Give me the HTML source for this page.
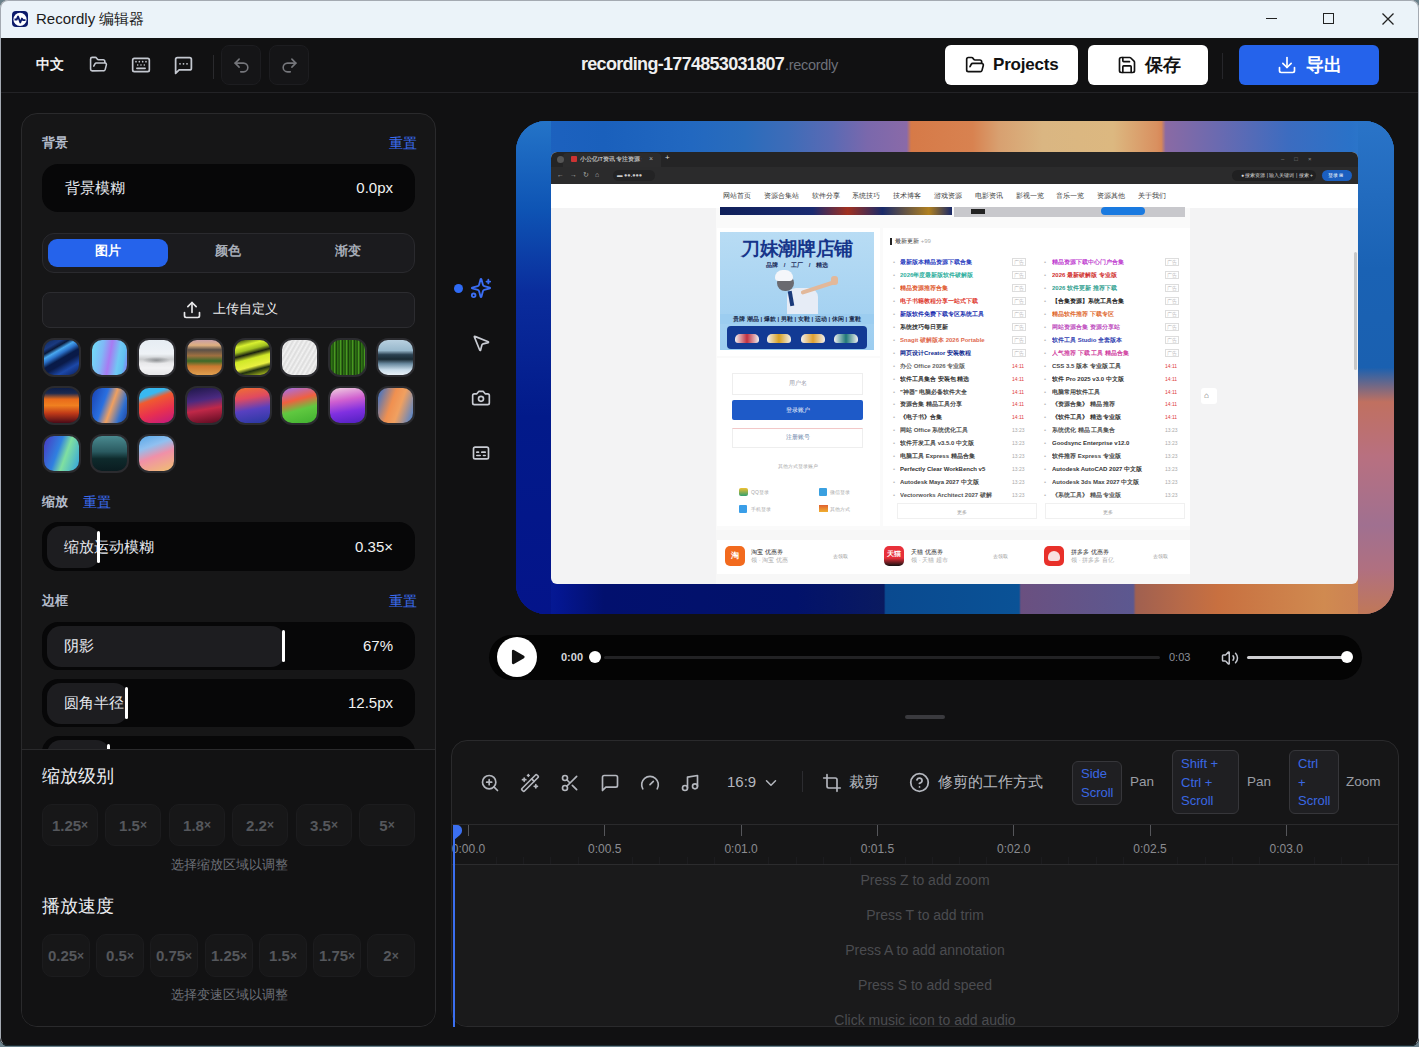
<!DOCTYPE html>
<html><head><meta charset="utf-8">
<style>
*{box-sizing:border-box;margin:0;padding:0}
html,body{width:1419px;height:1047px;overflow:hidden;background:#6b818b;font-family:"Liberation Sans",sans-serif}
.a{position:absolute}
svg{display:block}
.ic{fill:none;stroke:currentColor;stroke-width:2;stroke-linecap:round;stroke-linejoin:round}
#win{position:absolute;left:0;top:0;width:1419px;height:1046px;border-radius:8px;overflow:hidden;background:#111112}
#wb{position:absolute;left:0;top:0;width:1419px;height:1046px;border-radius:8px;border:1px solid #a4aab2;border-bottom-color:#1a2a30;pointer-events:none}
#title{left:0;top:0;width:1419px;height:38px;background:#ebf3f9}
#app{left:0;top:38px;width:1419px;height:1009px;background:#111112}
.lbl{color:#b4bccb;font-size:13px;font-weight:bold}
.rst{color:#3b6cf0;font-size:13.5px}
.slider{background:#070708;border-radius:16px}
.fill{background:#1d1d20;border-radius:14px}
.thumb{background:#fff;width:3px;border-radius:2px}
.sval{color:#f2f2f2;font-size:15px}
.sname{color:#e6e9ef;font-size:15px}
.zb{background:#171718;border:1px solid #1c1c1e;border-radius:10px;color:#55575c;font-weight:bold;font-size:15px;display:flex;align-items:center;justify-content:center}
.kbd{background:#1f1f22;border:1px solid #36363a;border-radius:6px;color:#3a68e4;font-size:13px;line-height:18.5px;padding:2px 0 0 9px}
.tk{color:#8b8c91;font-size:12px}
.hint{color:#4b4c50;font-size:14px;text-align:center;width:400px}
</style></head><body>
<div id="win">
<div id="title" class="a">
  <svg class="a" style="left:11px;top:10px" width="18" height="18" viewBox="0 0 18 18"><rect x="1" y="1" width="16" height="16" rx="4" fill="#0c1a6a"/><circle cx="9" cy="9.4" r="6.6" fill="#fff"/><path d="M3.5 9.5h2.2l1.4-3 2.2 6 1.6-4 1 1.6h2.6" fill="none" stroke="#0c1a6a" stroke-width="1.8" stroke-linejoin="round"/></svg>
  <div class="a" style="left:36px;top:10px;font-size:15px;color:#1b1b1b;line-height:18px">Recordly 编辑器</div>
  <div class="a" style="left:1266px;top:18px;width:11px;height:1px;background:#222"></div>
  <div class="a" style="left:1323px;top:13px;width:11px;height:11px;border:1.2px solid #222"></div>
  <svg class="a" style="left:1381px;top:12px" width="14" height="14" viewBox="0 0 14 14"><path d="M1.5 1.5l11 11M12.5 1.5l-11 11" stroke="#222" stroke-width="1.3"/></svg>
</div>
<div id="app" class="a"></div>
<div class="a" style="left:0;top:92px;width:1419px;height:1px;background:#232326"></div>
<div class="a" style="left:36px;top:56px;font-size:14px;font-weight:bold;color:#f0f0f0;line-height:16px">中文</div>
<svg class="a ic" style="left:89px;top:55px;color:#c4c8d0" width="19" height="19" viewBox="0 0 24 24" stroke-width="1.9"><path d="m6 14 1.5-2.9A2 2 0 0 1 9.24 10H20a2 2 0 0 1 1.94 2.5l-1.54 6a2 2 0 0 1-1.95 1.5H4a2 2 0 0 1-2-2V5a2 2 0 0 1 2-2h3.9a2 2 0 0 1 1.69.9l.81 1.2a2 2 0 0 0 1.67.9H18a2 2 0 0 1 2 2v2"/></svg>
<svg class="a ic" style="left:131px;top:55px;color:#c4c8d0" width="20" height="20" viewBox="0 0 24 24" stroke-width="1.9"><rect x="2" y="4" width="20" height="16" rx="2"/><path d="M6 8h.001M10 8h.001M14 8h.001M18 8h.001M8 12h.001M12 12h.001M16 12h.001M7 16h10"/></svg>
<svg class="a ic" style="left:173px;top:55px;color:#c4c8d0" width="21" height="21" viewBox="0 0 24 24" stroke-width="1.9"><path d="M21 15a2 2 0 0 1-2 2H7l-4 4V5a2 2 0 0 1 2-2h14a2 2 0 0 1 2 2z"/><path d="M8 10h.01M12 10h.01M16 10h.01"/></svg>
<div class="a" style="left:213px;top:55px;width:1px;height:24px;background:#2a2a2d"></div>
<div class="a" style="left:221px;top:45px;width:40px;height:40px;border-radius:8px;background:#151517;border:1px solid #1d1d20"></div>
<svg class="a ic" style="left:232px;top:56px;color:#75767b" width="19" height="19" viewBox="0 0 24 24" stroke-width="1.9"><path d="M9 14 4 9l5-5"/><path d="M4 9h10.5a5.5 5.5 0 0 1 5.5 5.5a5.5 5.5 0 0 1-5.5 5.5H11"/></svg>
<div class="a" style="left:269px;top:45px;width:40px;height:40px;border-radius:8px;background:#151517;border:1px solid #1d1d20"></div>
<svg class="a ic" style="left:280px;top:56px;color:#75767b" width="19" height="19" viewBox="0 0 24 24" stroke-width="1.9"><path d="m15 14 5-5-5-5"/><path d="M20 9H9.5A5.5 5.5 0 0 0 4 14.5A5.5 5.5 0 0 0 9.5 20H13"/></svg>
<div class="a" style="left:581px;top:54px;font-size:18px;font-weight:bold;color:#efefef;letter-spacing:-0.7px;line-height:20px;white-space:nowrap">recording-1774853031807<span style="font-weight:normal;font-size:14.5px;color:#6d7079;letter-spacing:-0.3px;margin-left:1px">.recordly</span></div>
<div class="a" style="left:945px;top:45px;width:133px;height:40px;border-radius:6px;background:#fff"></div>
<svg class="a ic" style="left:965px;top:55px;color:#111" width="20" height="20" viewBox="0 0 24 24" stroke-width="2"><path d="m6 14 1.5-2.9A2 2 0 0 1 9.24 10H20a2 2 0 0 1 1.94 2.5l-1.54 6a2 2 0 0 1-1.95 1.5H4a2 2 0 0 1-2-2V5a2 2 0 0 1 2-2h3.9a2 2 0 0 1 1.69.9l.81 1.2a2 2 0 0 0 1.67.9H18a2 2 0 0 1 2 2v2"/></svg>
<div class="a" style="left:993px;top:55px;font-size:17px;font-weight:bold;color:#111;line-height:20px;letter-spacing:-0.2px">Projects</div>
<div class="a" style="left:1088px;top:45px;width:120px;height:40px;border-radius:6px;background:#fff"></div>
<svg class="a ic" style="left:1117px;top:55px;color:#111" width="20" height="20" viewBox="0 0 24 24" stroke-width="2"><path d="M15.2 3a2 2 0 0 1 1.4.6l3.8 3.8a2 2 0 0 1 .6 1.4V19a2 2 0 0 1-2 2H5a2 2 0 0 1-2-2V5a2 2 0 0 1 2-2z"/><path d="M17 21v-7a1 1 0 0 0-1-1H8a1 1 0 0 0-1 1v7"/><path d="M7 3v4a1 1 0 0 0 1 1h7"/></svg>
<div class="a" style="left:1145px;top:55px;font-size:17.5px;font-weight:bold;color:#111;line-height:20px">保存</div>
<div class="a" style="left:1222px;top:53px;width:1px;height:26px;background:#26262a"></div>
<div class="a" style="left:1239px;top:45px;width:140px;height:40px;border-radius:6px;background:#2563eb"></div>
<svg class="a ic" style="left:1277px;top:55px;color:#fff" width="20" height="20" viewBox="0 0 24 24" stroke-width="2"><path d="M21 15v4a2 2 0 0 1-2 2H5a2 2 0 0 1-2-2v-4"/><path d="m7 10 5 5 5-5"/><path d="M12 15V3"/></svg>
<div class="a" style="left:1306px;top:55px;font-size:18px;font-weight:bold;color:#fff;line-height:20px">导出</div>
<div class="a" style="left:21px;top:113px;width:415px;height:914px;border-radius:16px;background:#161617;border:1px solid #2a2a2c;overflow:hidden"><div class="a" style="left:0;top:636px;width:413px;height:300px;background:#121213"></div></div>
<div class="a lbl" style="left:42px;top:134px;line-height:18px">背景</div>
<div class="a rst" style="left:389px;top:135px;line-height:18px">重置</div>
<div class="a slider" style="left:42px;top:164px;width:373px;height:48px"></div>
<div class="a sname" style="left:65px;top:178px;line-height:19px">背景模糊</div>
<div class="a sval" style="left:300px;top:178px;width:93px;text-align:right;line-height:19px">0.0px</div>
<div class="a" style="left:42px;top:233px;width:373px;height:40px;border-radius:12px;background:#1b1b1e;border:1px solid #2a2a2e"></div>
<div class="a" style="left:48px;top:239px;width:120px;height:28px;border-radius:9px;background:#2563eb"></div>
<div class="a" style="left:48px;top:242px;width:120px;text-align:center;font-size:13px;font-weight:bold;color:#fff;line-height:18px">图片</div>
<div class="a" style="left:168px;top:242px;width:120px;text-align:center;font-size:13px;font-weight:bold;color:#a7adb8;line-height:18px">颜色</div>
<div class="a" style="left:288px;top:242px;width:120px;text-align:center;font-size:13px;font-weight:bold;color:#a7adb8;line-height:18px">渐变</div>
<div class="a" style="left:42px;top:292px;width:373px;height:36px;border-radius:8px;background:#1c1c1f;border:1px solid #2c2c30"></div>
<svg class="a ic" style="left:182px;top:300px;color:#e8e8ea" width="20" height="20" viewBox="0 0 24 24" stroke-width="2"><path d="M21 15v4a2 2 0 0 1-2 2H5a2 2 0 0 1-2-2v-4"/><path d="m17 8-5-5-5 5"/><path d="M12 3v12"/></svg>
<div class="a" style="left:213px;top:300px;font-size:13px;color:#ececee;line-height:18px">上传自定义</div>
<div class="a" style="left:42px;top:338px;width:39px;height:39px;border-radius:12px;border:2px solid #2b2b2f;background:linear-gradient(150deg,#10285a 0%,#1a3a80 18%,#0a1838 26%,#48a8f0 34%,#2a70c8 42%,#081a48 52%,#0a1a48 62%,#1c48a8 78%,#0a1e5a 100%)"></div>
<div class="a" style="left:90px;top:338px;width:39px;height:39px;border-radius:12px;border:2px solid #2b2b2f;background:linear-gradient(100deg,#6fe0f8 0%,#80b8f6 30%,#a87af2 50%,#70c8f4 72%,#60c0f0 85%,#8a70f0 100%)"></div>
<div class="a" style="left:137px;top:338px;width:39px;height:39px;border-radius:12px;border:2px solid #2b2b2f;background:radial-gradient(ellipse 40% 10% at 50% 58%,rgba(90,94,98,.55) 0%,transparent 100%),linear-gradient(180deg,#e6edf3 0%,#eef2f6 40%,#c8cacc 55%,#e8e8ea 66%,#f2f2f4 80%,#e4e4e6 100%)"></div>
<div class="a" style="left:185px;top:338px;width:39px;height:39px;border-radius:12px;border:2px solid #2b2b2f;background:linear-gradient(180deg,#c8a0a8 0%,#e0b080 15%,#5a5048 28%,#a07040 45%,#3a6a28 60%,#c87830 75%,#e0a050 100%)"></div>
<div class="a" style="left:233px;top:338px;width:39px;height:39px;border-radius:12px;border:2px solid #2b2b2f;background:linear-gradient(165deg,#1a2a08 0%,#d8f030 18%,#a0c020 30%,#1a2010 40%,#d0e828 52%,#e8f040 70%,#203010 80%,#d0e020 100%)"></div>
<div class="a" style="left:280px;top:338px;width:39px;height:39px;border-radius:12px;border:2px solid #2b2b2f;background:repeating-linear-gradient(120deg,#f4f4f4 0px,#dcdcdc 2px,#f0f0f0 4px),#eee"></div>
<div class="a" style="left:328px;top:338px;width:39px;height:39px;border-radius:12px;border:2px solid #2b2b2f;background:repeating-linear-gradient(90deg,#0e2a08 0px,#3a8a18 2px,#143a0a 3px,#58b828 5px,#0c2006 6px),#1c4a0c"></div>
<div class="a" style="left:376px;top:338px;width:39px;height:39px;border-radius:12px;border:2px solid #2b2b2f;background:linear-gradient(180deg,#b8d0e0 0%,#98b8cc 30%,#2a4050 42%,#1a2a34 55%,#6a8aa0 68%,#c8dcea 85%,#e8f0f6 100%)"></div>
<div class="a" style="left:42px;top:386px;width:39px;height:39px;border-radius:12px;border:2px solid #2b2b2f;background:linear-gradient(180deg,#0e1e48 0%,#1a2a50 15%,#e86a1a 32%,#f08020 50%,#c03a18 72%,#4a0a18 100%)"></div>
<div class="a" style="left:90px;top:386px;width:39px;height:39px;border-radius:12px;border:2px solid #2b2b2f;background:linear-gradient(110deg,#1840b0 0%,#2a70e0 35%,#f0a060 55%,#3070d0 80%,#1a40a0 100%)"></div>
<div class="a" style="left:137px;top:386px;width:39px;height:39px;border-radius:12px;border:2px solid #2b2b2f;background:linear-gradient(160deg,#38b8f0 0%,#38b8f0 22%,#f05a30 35%,#e83050 65%,#c01880 100%)"></div>
<div class="a" style="left:185px;top:386px;width:39px;height:39px;border-radius:12px;border:2px solid #2b2b2f;background:linear-gradient(170deg,#1e1848 0%,#4a2a80 35%,#c02848 60%,#5a0a20 100%)"></div>
<div class="a" style="left:233px;top:386px;width:39px;height:39px;border-radius:12px;border:2px solid #2b2b2f;background:linear-gradient(170deg,#f07030 0%,#e04a60 30%,#5840c0 60%,#2838a0 100%)"></div>
<div class="a" style="left:280px;top:386px;width:39px;height:39px;border-radius:12px;border:2px solid #2b2b2f;background:linear-gradient(165deg,#a070f0 0%,#f06040 35%,#60c840 60%,#40b030 100%)"></div>
<div class="a" style="left:328px;top:386px;width:39px;height:39px;border-radius:12px;border:2px solid #2b2b2f;background:linear-gradient(170deg,#f0d0e0 0%,#d060d0 35%,#8030e0 65%,#5020c0 100%)"></div>
<div class="a" style="left:376px;top:386px;width:39px;height:39px;border-radius:12px;border:2px solid #2b2b2f;background:linear-gradient(110deg,#3070d0 0%,#f09050 40%,#f0a060 60%,#4080d8 100%)"></div>
<div class="a" style="left:42px;top:434px;width:39px;height:39px;border-radius:12px;border:2px solid #2b2b2f;background:linear-gradient(110deg,#4838c0 0%,#3080e0 40%,#80e0a0 60%,#30a0e0 100%)"></div>
<div class="a" style="left:90px;top:434px;width:39px;height:39px;border-radius:12px;border:2px solid #2b2b2f;background:linear-gradient(180deg,#4a8a90 0%,#2a5a60 45%,#0e2a2c 65%,#0a1c20 100%)"></div>
<div class="a" style="left:137px;top:434px;width:39px;height:39px;border-radius:12px;border:2px solid #2b2b2f;background:linear-gradient(160deg,#58a8e8 0%,#90c0f0 30%,#f090a8 55%,#f0c070 100%)"></div>
<div class="a lbl" style="left:42px;top:493px;line-height:18px">缩放</div>
<div class="a rst" style="left:83px;top:494px;line-height:18px">重置</div>
<div class="a slider" style="left:42px;top:522px;width:373px;height:49px"></div>
<div class="a fill" style="left:47px;top:526px;width:53px;height:42px"></div>
<div class="a sname" style="left:64px;top:537px;line-height:19px">缩放运动模糊</div>
<div class="a thumb" style="left:97px;top:531px;height:32px"></div>
<div class="a sval" style="left:300px;top:537px;width:93px;text-align:right;line-height:19px">0.35×</div>
<div class="a lbl" style="left:42px;top:592px;line-height:18px">边框</div>
<div class="a rst" style="left:389px;top:593px;line-height:18px">重置</div>
<div class="a slider" style="left:42px;top:622px;width:373px;height:48px"></div>
<div class="a fill" style="left:47px;top:626px;width:238px;height:41px"></div>
<div class="a sname" style="left:64px;top:636px;line-height:19px">阴影</div>
<div class="a thumb" style="left:282px;top:630px;height:32px"></div>
<div class="a sval" style="left:300px;top:636px;width:93px;text-align:right;line-height:19px">67%</div>
<div class="a slider" style="left:42px;top:679px;width:373px;height:48px"></div>
<div class="a fill" style="left:47px;top:683px;width:81px;height:41px"></div>
<div class="a sname" style="left:64px;top:693px;line-height:19px">圆角半径</div>
<div class="a thumb" style="left:125px;top:687px;height:32px"></div>
<div class="a sval" style="left:300px;top:693px;width:93px;text-align:right;line-height:19px">12.5px</div>
<div class="a" style="left:42px;top:736px;width:373px;height:13px;overflow:hidden"><div class="a slider" style="left:0;top:0;width:373px;height:48px"></div><div class="a fill" style="left:5px;top:4px;width:63px;height:41px"></div><div class="a thumb" style="left:65px;top:8px;height:32px"></div></div>
<div class="a" style="left:22px;top:749px;width:413px;height:1px;background:#2a2a2c"></div>
<div class="a" style="left:42px;top:765px;font-size:18px;color:#eceef2;line-height:22px">缩放级别</div>
<div class="a zb" style="left:42px;top:804px;width:56px;height:42px">1.25<span style="font-size:12px">×</span></div>
<div class="a zb" style="left:105px;top:804px;width:56px;height:42px">1.5<span style="font-size:12px">×</span></div>
<div class="a zb" style="left:169px;top:804px;width:56px;height:42px">1.8<span style="font-size:12px">×</span></div>
<div class="a zb" style="left:232px;top:804px;width:56px;height:42px">2.2<span style="font-size:12px">×</span></div>
<div class="a zb" style="left:296px;top:804px;width:56px;height:42px">3.5<span style="font-size:12px">×</span></div>
<div class="a zb" style="left:359px;top:804px;width:56px;height:42px">5<span style="font-size:12px">×</span></div>
<div class="a" style="left:129px;top:856px;width:200px;text-align:center;font-size:13px;color:#6e7178;line-height:17px">选择缩放区域以调整</div>
<div class="a" style="left:42px;top:895px;font-size:18px;color:#eceef2;line-height:22px">播放速度</div>
<div class="a zb" style="left:42px;top:934px;width:48px;height:43px">0.25<span style="font-size:12px">×</span></div>
<div class="a zb" style="left:96px;top:934px;width:48px;height:43px">0.5<span style="font-size:12px">×</span></div>
<div class="a zb" style="left:150px;top:934px;width:48px;height:43px">0.75<span style="font-size:12px">×</span></div>
<div class="a zb" style="left:205px;top:934px;width:48px;height:43px">1.25<span style="font-size:12px">×</span></div>
<div class="a zb" style="left:259px;top:934px;width:48px;height:43px">1.5<span style="font-size:12px">×</span></div>
<div class="a zb" style="left:313px;top:934px;width:48px;height:43px">1.75<span style="font-size:12px">×</span></div>
<div class="a zb" style="left:367px;top:934px;width:48px;height:43px">2<span style="font-size:12px">×</span></div>
<div class="a" style="left:129px;top:986px;width:200px;text-align:center;font-size:13px;color:#6e7178;line-height:17px">选择变速区域以调整</div>
<div class="a" style="left:516px;top:121px;width:878px;height:493px;border-radius:30px;overflow:hidden;background:linear-gradient(180deg,#1c72c8 0%,#0c52b2 20%,#0a2c9a 38%,#031c8a 60%,#04168a 100%)">
  <div class="a" style="left:0;top:0;width:878px;height:40px;background:linear-gradient(90deg,#1e62c0 0%,#1a60bc 10%,#2268c0 20%,#2a6cbc 26%,#3e6cb8 31%,#5a6ab4 36%,#7a68ac 40%,#8a6aa8 44.5%,#d67a48 45%,#d88250 52%,#d8a070 55%,#dab682 60%,#dcb880 68%,#d99060 73%,#d88858 73.5%,#8a6aa4 74%,#6a6ab0 80%,#3c6cc0 88%,#2a72c8 95%,#3080d0 100%)"></div>
  <div class="a" style="left:0;top:455px;width:878px;height:38px;background:linear-gradient(90deg,#0a22a0 0%,#041690 5%,#02106e 10%,#02126a 32%,#0a1a60 41.9%,#0a4a90 42.1%,#0a5296 57.3%,#6a5080 57.5%,#5c5890 70.3%,#a06050 70.6%,#b86a48 76%,#c87040 80%,#d08a50 92%,#c87a58 100%)"></div>
  <div class="a" style="left:842px;top:0;width:36px;height:493px;background:linear-gradient(180deg,#2a74c8 0%,#1a62b4 30%,#1a60b0 50%,#c07060 57%,#b87080 68%,#a07090 82%,#b07080 91%,#c07858 100%)"></div>
  <div class="a" style="left:0;top:0;width:35px;height:493px;background:linear-gradient(180deg,#2474c8 0%,#0e54b4 18%,#0a2c9c 35%,#021a8a 60%,#04148a 100%)"></div>
</div>
<div class="a" style="left:551px;top:152px;width:807px;height:432px;border-radius:6px;overflow:hidden;background:#f3f3f4">
  <div class="a" style="left:0;top:0;width:807px;height:15px;background:#242425"></div>
  <div class="a" style="left:12px;top:1px;width:98px;height:14px;background:#2c2c2d;border-radius:4px 4px 0 0"></div>
  <div class="a" style="left:6px;top:4px;width:7px;height:7px;border-radius:4px;background:#555"></div>
  <div class="a" style="left:20px;top:4px;width:6px;height:6px;background:#c33;border-radius:1px"></div>
  <div class="a" style="left:29px;top:3px;width:62px;overflow:hidden;font-size:5.5px;font-weight:bold;color:#bdbdbd;line-height:9px;white-space:nowrap">小公亿IT资讯 专注资源 分享</div>
  <div class="a" style="left:98px;top:2px;font-size:7px;color:#aaa;line-height:10px">×</div>
  <div class="a" style="left:114px;top:1px;font-size:8px;color:#ddd;line-height:10px">+</div>
  <div class="a" style="left:730px;top:3px;font-size:6px;color:#888;line-height:8px;letter-spacing:10px">–□×</div>
  <div class="a" style="left:0;top:15px;width:807px;height:17px;background:#2b2b2c"></div>
  <div class="a" style="left:6px;top:17px;font-size:7px;color:#aaa;line-height:12px;letter-spacing:6px;white-space:nowrap">←→↻⌂</div>
  <div class="a" style="left:62px;top:18px;width:42px;height:11px;border-radius:6px;background:#232324"></div>
  <div class="a" style="left:66px;top:19px;font-size:5.5px;font-weight:bold;color:#ccc;line-height:9px">▬ ●●.●●●</div>
  <div class="a" style="left:681px;top:18px;width:84px;height:11px;border-radius:6px;background:#202021"></div>
  <div class="a" style="left:690px;top:19px;font-size:5px;color:#ddd;line-height:9px;white-space:nowrap">● 搜索资源 | 输入关键词 | 搜索 +</div>
  <div class="a" style="left:771px;top:18px;width:30px;height:11px;border-radius:6px;background:#1b5fc0"></div>
  <div class="a" style="left:777px;top:19px;font-size:5px;color:#fff;line-height:9px">登录 ⊞</div>
  <div class="a" style="left:0;top:32px;width:807px;height:24px;background:#fff"></div>
  <div class="a" style="left:172px;top:39px;font-size:6.5px;color:#444;line-height:10px;word-spacing:11px;white-space:nowrap">网站首页 资源合集站 软件分享 系统技巧 技术博客 游戏资源 电影资讯 影视一览 音乐一览 资源其他 关于我们</div>
  <div class="a" style="left:165px;top:56px;width:474px;height:376px;background:#fafafa"></div>
  <div class="a" style="left:169px;top:55px;width:232px;height:8px;background:linear-gradient(90deg,#10205a,#1a2a70 40%,#a03020 55%,#1a2a6a 70%,#b08020 90%,#182868)"></div>
  <div class="a" style="left:403px;top:55px;width:231px;height:10px;background:#c8c8cc"></div>
  <div class="a" style="left:420px;top:57px;width:14px;height:5px;background:#222"></div>
  <div class="a" style="left:550px;top:55px;width:44px;height:8px;border-radius:4px;background:#1a7ae0"></div>
  <!-- banner card -->
  <div class="a" style="left:166px;top:76px;width:163px;height:128px;background:#fff"></div>
  <div class="a" style="left:169px;top:80px;width:154px;height:118px;background:linear-gradient(180deg,#b8dcf4,#9ccdf0)"></div>
  <div class="a" style="left:169px;top:86px;width:154px;text-align:center;font-size:19px;font-weight:bold;color:#16358a;line-height:22px;letter-spacing:-0.3px">刀妹潮牌店铺</div>
  <div class="a" style="left:169px;top:109px;width:154px;text-align:center;font-size:6px;font-weight:bold;color:#1a2a5a;line-height:8px;word-spacing:4px">品牌 / 工厂 / 精选</div>
  <div class="a" style="left:236px;top:136px;width:31px;height:26px;border-radius:9px 9px 0 0;background:#e6ecf6"></div>
  <div class="a" style="left:250px;top:139px;width:36px;height:4px;border-radius:3px;background:#e2b89a;transform:rotate(-18deg);transform-origin:0 50%"></div>
  <div class="a" style="left:280px;top:124px;width:7px;height:9px;border-radius:3px;background:#e2b89a"></div>
  <div class="a" style="left:226px;top:123px;width:17px;height:16px;border-radius:8px;background:#6a6a70"></div>
  <div class="a" style="left:224px;top:118px;width:18px;height:11px;border-radius:9px 9px 4px 4px;background:#f4f6fa"></div>
  <div class="a" style="left:238px;top:139px;width:4px;height:15px;background:#1a3a7a;transform:rotate(-10deg)"></div>
  <div class="a" style="left:169px;top:162px;width:154px;text-align:center;font-size:6px;font-weight:bold;color:#1a2a4a;line-height:10px;background:#9ccdf0;white-space:nowrap;overflow:hidden">贵牌 潮品 | 爆款 | 男鞋 | 女鞋 | 运动 | 休闲 | 童鞋</div>
  <div class="a" style="left:176px;top:174px;width:140px;height:23px;border-radius:4px;background:#123a94"></div>
  <div class="a" style="left:184px;top:182px;width:24px;height:9px;border-radius:5px 5px 3px 3px;background:linear-gradient(90deg,#f0f0f0,#c03040 50%,#f0f0f0)"></div>
  <div class="a" style="left:216px;top:182px;width:24px;height:9px;border-radius:5px 5px 3px 3px;background:linear-gradient(90deg,#f0f0f0,#d8a020 50%,#f0f0f0)"></div>
  <div class="a" style="left:250px;top:182px;width:24px;height:9px;border-radius:5px 5px 3px 3px;background:linear-gradient(90deg,#f0f0f0,#e0a030 50%,#f0f0f0)"></div>
  <div class="a" style="left:283px;top:182px;width:24px;height:9px;border-radius:5px 5px 3px 3px;background:linear-gradient(90deg,#f0f0f0,#207878 50%,#f0f0f0)"></div>
  <!-- login card -->
  <div class="a" style="left:166px;top:206px;width:163px;height:168px;background:#fff"></div>
  <div class="a" style="left:181px;top:221px;width:131px;height:22px;border:1px solid #eee;background:#fff"></div>
  <div class="a" style="left:181px;top:227px;width:131px;text-align:center;font-size:6px;color:#99a;line-height:9px">用户名</div>
  <div class="a" style="left:181px;top:248px;width:131px;height:20px;border-radius:2px;background:#1e5ac8"></div>
  <div class="a" style="left:181px;top:254px;width:131px;text-align:center;font-size:6px;color:#fff;line-height:9px">登录账户</div>
  <div class="a" style="left:181px;top:276px;width:131px;height:20px;border:1px solid #eee;border-top:1px solid #f2c8c8;background:#fff"></div>
  <div class="a" style="left:181px;top:281px;width:131px;text-align:center;font-size:6px;color:#5a7aa0;line-height:9px">注册账号</div>
  <div class="a" style="left:181px;top:310px;width:131px;text-align:center;font-size:5px;color:#aaa;line-height:8px">其他方式登录账户</div>
  <div class="a" style="left:188px;top:336px;width:9px;height:8px;border-radius:2px;background:linear-gradient(180deg,#f0c030,#30a070)"></div>
  <div class="a" style="left:200px;top:336px;font-size:5px;color:#aaa;line-height:8px">QQ登录</div>
  <div class="a" style="left:268px;top:336px;width:8px;height:8px;background:#3aa0e0;border-radius:1px"></div>
  <div class="a" style="left:279px;top:336px;font-size:5px;color:#aaa;line-height:8px">微信登录</div>
  <div class="a" style="left:188px;top:353px;width:8px;height:8px;background:#3a9ee8;border-radius:1px"></div>
  <div class="a" style="left:200px;top:353px;font-size:5px;color:#aaa;line-height:8px">手机登录</div>
  <div class="a" style="left:268px;top:353px;width:9px;height:7px;background:linear-gradient(180deg,#e06030,#f0b030)"></div>
  <div class="a" style="left:279px;top:353px;font-size:5px;color:#aaa;line-height:8px">其他方式</div>
  <!-- list card -->
  <div class="a" style="left:332px;top:76px;width:307px;height:298px;background:#fff"></div>
  <div class="a" style="left:339px;top:86px;width:2px;height:7px;background:#222"></div>
  <div class="a" style="left:344px;top:85px;font-size:6px;color:#333;line-height:9px;white-space:nowrap">最新更新 <span style="color:#aaa">+99</span></div>
  <div class="a" style="left:342px;top:106.00px;font-size:6px;line-height:9px;color:#bbb">•</div>
  <div class="a" style="left:349px;top:106.00px;width:108px;overflow:hidden;white-space:nowrap;font-size:6px;font-weight:bold;line-height:9px;color:#2a40c0">最新版本精品资源下载合集</div>
  <div class="a" style="left:461px;top:106.00px;font-size:5px;line-height:9px;color:#bbb"><span style="color:#bbb;border:1px solid #ddd;padding:0 1px">广告</span></div>
  <div class="a" style="left:493px;top:106.00px;font-size:6px;line-height:9px;color:#bbb">•</div>
  <div class="a" style="left:501px;top:106.00px;width:108px;overflow:hidden;white-space:nowrap;font-size:6px;font-weight:bold;line-height:9px;color:#c040d0">精品资源下载中心门户合集</div>
  <div class="a" style="left:614px;top:106.00px;font-size:5px;line-height:9px;color:#bbb"><span style="color:#bbb;border:1px solid #ddd;padding:0 1px">广告</span></div>
  <div class="a" style="left:342px;top:118.95px;font-size:6px;line-height:9px;color:#bbb">•</div>
  <div class="a" style="left:349px;top:118.95px;width:108px;overflow:hidden;white-space:nowrap;font-size:6px;font-weight:bold;line-height:9px;color:#30b0a0">2026年度最新版软件破解版</div>
  <div class="a" style="left:461px;top:118.95px;font-size:5px;line-height:9px;color:#bbb"><span style="color:#bbb;border:1px solid #ddd;padding:0 1px">广告</span></div>
  <div class="a" style="left:493px;top:118.95px;font-size:6px;line-height:9px;color:#bbb">•</div>
  <div class="a" style="left:501px;top:118.95px;width:108px;overflow:hidden;white-space:nowrap;font-size:6px;font-weight:bold;line-height:9px;color:#d03030">2026 最新破解版 专业版</div>
  <div class="a" style="left:614px;top:118.95px;font-size:5px;line-height:9px;color:#bbb"><span style="color:#bbb;border:1px solid #ddd;padding:0 1px">广告</span></div>
  <div class="a" style="left:342px;top:131.90px;font-size:6px;line-height:9px;color:#bbb">•</div>
  <div class="a" style="left:349px;top:131.90px;width:108px;overflow:hidden;white-space:nowrap;font-size:6px;font-weight:bold;line-height:9px;color:#e05a30">精品资源推荐合集</div>
  <div class="a" style="left:461px;top:131.90px;font-size:5px;line-height:9px;color:#bbb"><span style="color:#bbb;border:1px solid #ddd;padding:0 1px">广告</span></div>
  <div class="a" style="left:493px;top:131.90px;font-size:6px;line-height:9px;color:#bbb">•</div>
  <div class="a" style="left:501px;top:131.90px;width:108px;overflow:hidden;white-space:nowrap;font-size:6px;font-weight:bold;line-height:9px;color:#30a090">2026 软件更新 推荐下载</div>
  <div class="a" style="left:614px;top:131.90px;font-size:5px;line-height:9px;color:#bbb"><span style="color:#bbb;border:1px solid #ddd;padding:0 1px">广告</span></div>
  <div class="a" style="left:342px;top:144.85px;font-size:6px;line-height:9px;color:#bbb">•</div>
  <div class="a" style="left:349px;top:144.85px;width:108px;overflow:hidden;white-space:nowrap;font-size:6px;font-weight:bold;line-height:9px;color:#e03a30">电子书籍教程分享一站式下载</div>
  <div class="a" style="left:461px;top:144.85px;font-size:5px;line-height:9px;color:#bbb"><span style="color:#bbb;border:1px solid #ddd;padding:0 1px">广告</span></div>
  <div class="a" style="left:493px;top:144.85px;font-size:6px;line-height:9px;color:#bbb">•</div>
  <div class="a" style="left:501px;top:144.85px;width:108px;overflow:hidden;white-space:nowrap;font-size:6px;font-weight:bold;line-height:9px;color:#222">【合集资源】系统工具合集</div>
  <div class="a" style="left:614px;top:144.85px;font-size:5px;line-height:9px;color:#bbb"><span style="color:#bbb;border:1px solid #ddd;padding:0 1px">广告</span></div>
  <div class="a" style="left:342px;top:157.80px;font-size:6px;line-height:9px;color:#bbb">•</div>
  <div class="a" style="left:349px;top:157.80px;width:108px;overflow:hidden;white-space:nowrap;font-size:6px;font-weight:bold;line-height:9px;color:#2030b0">新版软件免费下载专区系统工具</div>
  <div class="a" style="left:461px;top:157.80px;font-size:5px;line-height:9px;color:#bbb"><span style="color:#bbb;border:1px solid #ddd;padding:0 1px">广告</span></div>
  <div class="a" style="left:493px;top:157.80px;font-size:6px;line-height:9px;color:#bbb">•</div>
  <div class="a" style="left:501px;top:157.80px;width:108px;overflow:hidden;white-space:nowrap;font-size:6px;font-weight:bold;line-height:9px;color:#e06a30">精品软件推荐 下载专区</div>
  <div class="a" style="left:614px;top:157.80px;font-size:5px;line-height:9px;color:#bbb"><span style="color:#bbb;border:1px solid #ddd;padding:0 1px">广告</span></div>
  <div class="a" style="left:342px;top:170.75px;font-size:6px;line-height:9px;color:#bbb">•</div>
  <div class="a" style="left:349px;top:170.75px;width:108px;overflow:hidden;white-space:nowrap;font-size:6px;font-weight:bold;line-height:9px;color:#333">系统技巧每日更新</div>
  <div class="a" style="left:461px;top:170.75px;font-size:5px;line-height:9px;color:#bbb"><span style="color:#bbb;border:1px solid #ddd;padding:0 1px">广告</span></div>
  <div class="a" style="left:493px;top:170.75px;font-size:6px;line-height:9px;color:#bbb">•</div>
  <div class="a" style="left:501px;top:170.75px;width:108px;overflow:hidden;white-space:nowrap;font-size:6px;font-weight:bold;line-height:9px;color:#c050c0">网站资源合集 资源分享站</div>
  <div class="a" style="left:614px;top:170.75px;font-size:5px;line-height:9px;color:#bbb"><span style="color:#bbb;border:1px solid #ddd;padding:0 1px">广告</span></div>
  <div class="a" style="left:342px;top:183.70px;font-size:6px;line-height:9px;color:#bbb">•</div>
  <div class="a" style="left:349px;top:183.70px;width:108px;overflow:hidden;white-space:nowrap;font-size:6px;font-weight:bold;line-height:9px;color:#e06a50">Snagit 破解版本 2026 Portable</div>
  <div class="a" style="left:461px;top:183.70px;font-size:5px;line-height:9px;color:#bbb"><span style="color:#bbb;border:1px solid #ddd;padding:0 1px">广告</span></div>
  <div class="a" style="left:493px;top:183.70px;font-size:6px;line-height:9px;color:#bbb">•</div>
  <div class="a" style="left:501px;top:183.70px;width:108px;overflow:hidden;white-space:nowrap;font-size:6px;font-weight:bold;line-height:9px;color:#3040b0">软件工具 Studio 全套版本</div>
  <div class="a" style="left:614px;top:183.70px;font-size:5px;line-height:9px;color:#bbb"><span style="color:#bbb;border:1px solid #ddd;padding:0 1px">广告</span></div>
  <div class="a" style="left:342px;top:196.65px;font-size:6px;line-height:9px;color:#bbb">•</div>
  <div class="a" style="left:349px;top:196.65px;width:108px;overflow:hidden;white-space:nowrap;font-size:6px;font-weight:bold;line-height:9px;color:#102a90">网页设计Creator 安装教程</div>
  <div class="a" style="left:461px;top:196.65px;font-size:5px;line-height:9px;color:#bbb"><span style="color:#bbb;border:1px solid #ddd;padding:0 1px">广告</span></div>
  <div class="a" style="left:493px;top:196.65px;font-size:6px;line-height:9px;color:#bbb">•</div>
  <div class="a" style="left:501px;top:196.65px;width:108px;overflow:hidden;white-space:nowrap;font-size:6px;font-weight:bold;line-height:9px;color:#d040a0">人气推荐 下载 工具 精品合集</div>
  <div class="a" style="left:614px;top:196.65px;font-size:5px;line-height:9px;color:#bbb"><span style="color:#bbb;border:1px solid #ddd;padding:0 1px">广告</span></div>
  <div class="a" style="left:342px;top:209.60px;font-size:6px;line-height:9px;color:#bbb">•</div>
  <div class="a" style="left:349px;top:209.60px;width:108px;overflow:hidden;white-space:nowrap;font-size:6px;font-weight:bold;line-height:9px;color:#666">办公 Office 2026 专业版</div>
  <div class="a" style="left:461px;top:209.60px;font-size:5px;line-height:9px;color:#e04040">14:11</div>
  <div class="a" style="left:493px;top:209.60px;font-size:6px;line-height:9px;color:#bbb">•</div>
  <div class="a" style="left:501px;top:209.60px;width:108px;overflow:hidden;white-space:nowrap;font-size:6px;font-weight:bold;line-height:9px;color:#444">CSS 3.5 版本 专业版 工具</div>
  <div class="a" style="left:614px;top:209.60px;font-size:5px;line-height:9px;color:#e04040">14:11</div>
  <div class="a" style="left:342px;top:222.55px;font-size:6px;line-height:9px;color:#bbb">•</div>
  <div class="a" style="left:349px;top:222.55px;width:108px;overflow:hidden;white-space:nowrap;font-size:6px;font-weight:bold;line-height:9px;color:#333">软件工具集合 安装包 精选</div>
  <div class="a" style="left:461px;top:222.55px;font-size:5px;line-height:9px;color:#e04040">14:11</div>
  <div class="a" style="left:493px;top:222.55px;font-size:6px;line-height:9px;color:#bbb">•</div>
  <div class="a" style="left:501px;top:222.55px;width:108px;overflow:hidden;white-space:nowrap;font-size:6px;font-weight:bold;line-height:9px;color:#333">软件 Pro 2025 v3.0 中文版</div>
  <div class="a" style="left:614px;top:222.55px;font-size:5px;line-height:9px;color:#e04040">14:11</div>
  <div class="a" style="left:342px;top:235.50px;font-size:6px;line-height:9px;color:#bbb">•</div>
  <div class="a" style="left:349px;top:235.50px;width:108px;overflow:hidden;white-space:nowrap;font-size:6px;font-weight:bold;line-height:9px;color:#444">"神器" 电脑必备软件大全</div>
  <div class="a" style="left:461px;top:235.50px;font-size:5px;line-height:9px;color:#e04040">14:11</div>
  <div class="a" style="left:493px;top:235.50px;font-size:6px;line-height:9px;color:#bbb">•</div>
  <div class="a" style="left:501px;top:235.50px;width:108px;overflow:hidden;white-space:nowrap;font-size:6px;font-weight:bold;line-height:9px;color:#444">电脑常用软件工具</div>
  <div class="a" style="left:614px;top:235.50px;font-size:5px;line-height:9px;color:#e04040">14:11</div>
  <div class="a" style="left:342px;top:248.45px;font-size:6px;line-height:9px;color:#bbb">•</div>
  <div class="a" style="left:349px;top:248.45px;width:108px;overflow:hidden;white-space:nowrap;font-size:6px;font-weight:bold;line-height:9px;color:#444">资源合集 精品工具分享</div>
  <div class="a" style="left:461px;top:248.45px;font-size:5px;line-height:9px;color:#e04040">14:11</div>
  <div class="a" style="left:493px;top:248.45px;font-size:6px;line-height:9px;color:#bbb">•</div>
  <div class="a" style="left:501px;top:248.45px;width:108px;overflow:hidden;white-space:nowrap;font-size:6px;font-weight:bold;line-height:9px;color:#444">《资源合集》 精品 推荐</div>
  <div class="a" style="left:614px;top:248.45px;font-size:5px;line-height:9px;color:#e04040">14:11</div>
  <div class="a" style="left:342px;top:261.40px;font-size:6px;line-height:9px;color:#bbb">•</div>
  <div class="a" style="left:349px;top:261.40px;width:108px;overflow:hidden;white-space:nowrap;font-size:6px;font-weight:bold;line-height:9px;color:#333">《电子书》合集</div>
  <div class="a" style="left:461px;top:261.40px;font-size:5px;line-height:9px;color:#e04040">14:11</div>
  <div class="a" style="left:493px;top:261.40px;font-size:6px;line-height:9px;color:#bbb">•</div>
  <div class="a" style="left:501px;top:261.40px;width:108px;overflow:hidden;white-space:nowrap;font-size:6px;font-weight:bold;line-height:9px;color:#333">《软件工具》 精选 专业版</div>
  <div class="a" style="left:614px;top:261.40px;font-size:5px;line-height:9px;color:#e04040">14:11</div>
  <div class="a" style="left:342px;top:274.35px;font-size:6px;line-height:9px;color:#bbb">•</div>
  <div class="a" style="left:349px;top:274.35px;width:108px;overflow:hidden;white-space:nowrap;font-size:6px;font-weight:bold;line-height:9px;color:#555">网站 Office 系统优化工具</div>
  <div class="a" style="left:461px;top:274.35px;font-size:5px;line-height:9px;color:#aaa">13:23</div>
  <div class="a" style="left:493px;top:274.35px;font-size:6px;line-height:9px;color:#bbb">•</div>
  <div class="a" style="left:501px;top:274.35px;width:108px;overflow:hidden;white-space:nowrap;font-size:6px;font-weight:bold;line-height:9px;color:#555">系统优化 精品 工具集合</div>
  <div class="a" style="left:614px;top:274.35px;font-size:5px;line-height:9px;color:#aaa">13:23</div>
  <div class="a" style="left:342px;top:287.30px;font-size:6px;line-height:9px;color:#bbb">•</div>
  <div class="a" style="left:349px;top:287.30px;width:108px;overflow:hidden;white-space:nowrap;font-size:6px;font-weight:bold;line-height:9px;color:#444">软件开发工具 v3.5.0 中文版</div>
  <div class="a" style="left:461px;top:287.30px;font-size:5px;line-height:9px;color:#aaa">13:23</div>
  <div class="a" style="left:493px;top:287.30px;font-size:6px;line-height:9px;color:#bbb">•</div>
  <div class="a" style="left:501px;top:287.30px;width:108px;overflow:hidden;white-space:nowrap;font-size:6px;font-weight:bold;line-height:9px;color:#333">Goodsync Enterprise v12.0</div>
  <div class="a" style="left:614px;top:287.30px;font-size:5px;line-height:9px;color:#aaa">13:23</div>
  <div class="a" style="left:342px;top:300.25px;font-size:6px;line-height:9px;color:#bbb">•</div>
  <div class="a" style="left:349px;top:300.25px;width:108px;overflow:hidden;white-space:nowrap;font-size:6px;font-weight:bold;line-height:9px;color:#444">电脑工具 Express 精品合集</div>
  <div class="a" style="left:461px;top:300.25px;font-size:5px;line-height:9px;color:#aaa">13:23</div>
  <div class="a" style="left:493px;top:300.25px;font-size:6px;line-height:9px;color:#bbb">•</div>
  <div class="a" style="left:501px;top:300.25px;width:108px;overflow:hidden;white-space:nowrap;font-size:6px;font-weight:bold;line-height:9px;color:#444">软件推荐 Express 专业版</div>
  <div class="a" style="left:614px;top:300.25px;font-size:5px;line-height:9px;color:#aaa">13:23</div>
  <div class="a" style="left:342px;top:313.20px;font-size:6px;line-height:9px;color:#bbb">•</div>
  <div class="a" style="left:349px;top:313.20px;width:108px;overflow:hidden;white-space:nowrap;font-size:6px;font-weight:bold;line-height:9px;color:#333">Perfectly Clear WorkBench v5</div>
  <div class="a" style="left:461px;top:313.20px;font-size:5px;line-height:9px;color:#aaa">13:23</div>
  <div class="a" style="left:493px;top:313.20px;font-size:6px;line-height:9px;color:#bbb">•</div>
  <div class="a" style="left:501px;top:313.20px;width:108px;overflow:hidden;white-space:nowrap;font-size:6px;font-weight:bold;line-height:9px;color:#333">Autodesk AutoCAD 2027 中文版</div>
  <div class="a" style="left:614px;top:313.20px;font-size:5px;line-height:9px;color:#aaa">13:23</div>
  <div class="a" style="left:342px;top:326.15px;font-size:6px;line-height:9px;color:#bbb">•</div>
  <div class="a" style="left:349px;top:326.15px;width:108px;overflow:hidden;white-space:nowrap;font-size:6px;font-weight:bold;line-height:9px;color:#444">Autodesk Maya 2027 中文版</div>
  <div class="a" style="left:461px;top:326.15px;font-size:5px;line-height:9px;color:#aaa">13:23</div>
  <div class="a" style="left:493px;top:326.15px;font-size:6px;line-height:9px;color:#bbb">•</div>
  <div class="a" style="left:501px;top:326.15px;width:108px;overflow:hidden;white-space:nowrap;font-size:6px;font-weight:bold;line-height:9px;color:#444">Autodesk 3ds Max 2027 中文版</div>
  <div class="a" style="left:614px;top:326.15px;font-size:5px;line-height:9px;color:#aaa">13:23</div>
  <div class="a" style="left:342px;top:339.10px;font-size:6px;line-height:9px;color:#bbb">•</div>
  <div class="a" style="left:349px;top:339.10px;width:108px;overflow:hidden;white-space:nowrap;font-size:6px;font-weight:bold;line-height:9px;color:#555">Vectorworks Architect 2027 破解</div>
  <div class="a" style="left:461px;top:339.10px;font-size:5px;line-height:9px;color:#aaa">13:23</div>
  <div class="a" style="left:493px;top:339.10px;font-size:6px;line-height:9px;color:#bbb">•</div>
  <div class="a" style="left:501px;top:339.10px;width:108px;overflow:hidden;white-space:nowrap;font-size:6px;font-weight:bold;line-height:9px;color:#555">《系统工具》 精品 专业版</div>
  <div class="a" style="left:614px;top:339.10px;font-size:5px;line-height:9px;color:#aaa">13:23</div>
  <div class="a" style="left:406px;top:356px;font-size:5px;color:#999;line-height:8px">更多</div><div class="a" style="left:552px;top:356px;font-size:5px;color:#999;line-height:8px">更多</div><div class="a" style="left:346px;top:351px;width:140px;height:16px;border:1px solid #f0f0f0"></div><div class="a" style="left:494px;top:351px;width:140px;height:16px;border:1px solid #f0f0f0"></div>
  <!-- apps row -->
  <div class="a" style="left:165px;top:378px;width:474px;height:54px;background:#f7f7f7"></div>
  <div class="a" style="left:166px;top:388px;width:473px;height:34px;background:#fff"></div>
  <div class="a" style="left:174px;top:394px;width:20px;height:20px;border-radius:5px;background:#f26a1e"></div>
  <div class="a" style="left:175px;top:398px;width:18px;text-align:center;font-size:8px;font-weight:bold;color:#fff;line-height:11px">淘</div>
  <div class="a" style="left:200px;top:396px;font-size:6px;color:#222;line-height:8px;white-space:nowrap">淘宝 优惠券<br><span style="color:#aaa">领 · 淘宝 优惠</span></div>
  <div class="a" style="left:282px;top:400px;font-size:5px;color:#999;line-height:8px">去领取</div>
  <div class="a" style="left:333px;top:394px;width:20px;height:20px;border-radius:5px;background:linear-gradient(180deg,#e8303a 60%,#111 100%)"></div>
  <div class="a" style="left:334px;top:397px;width:18px;text-align:center;font-size:7px;font-weight:bold;color:#fff;line-height:9px">天猫</div>
  <div class="a" style="left:360px;top:396px;font-size:6px;color:#222;line-height:8px;white-space:nowrap">天猫 优惠券<br><span style="color:#aaa">领 · 天猫 超市</span></div>
  <div class="a" style="left:442px;top:400px;font-size:5px;color:#999;line-height:8px">去领取</div>
  <div class="a" style="left:493px;top:394px;width:20px;height:20px;border-radius:5px;background:#e8302a"></div>
  <div class="a" style="left:497px;top:399px;width:12px;height:10px;border-radius:6px 6px 3px 3px;background:#f8e0e0"></div>
  <div class="a" style="left:520px;top:396px;font-size:6px;color:#222;line-height:8px;white-space:nowrap">拼多多 优惠券<br><span style="color:#aaa">领 · 拼多多 百亿</span></div>
  <div class="a" style="left:602px;top:400px;font-size:5px;color:#999;line-height:8px">去领取</div>
  <div class="a" style="left:803px;top:100px;width:3px;height:118px;background:#c8c8c8;border-radius:2px"></div>
  <div class="a" style="left:650px;top:236px;width:16px;height:16px;background:#fff;border-radius:3px"></div>
  <div class="a" style="left:653px;top:239px;font-size:8px;color:#666;line-height:10px">⌂</div>
</div>
<div class="a" style="left:454px;top:284px;width:9px;height:9px;border-radius:5px;background:#2f6bf5"></div>
<svg class="a ic" style="left:470px;top:277px;color:#3b6ef5" width="22" height="22" viewBox="0 0 24 24" stroke-width="1.9"><path d="M9.937 15.5A2 2 0 0 0 8.5 14.063l-6.135-1.582a.5.5 0 0 1 0-.962L8.5 9.936A2 2 0 0 0 9.937 8.5l1.582-6.135a.5.5 0 0 1 .963 0L14.063 8.5A2 2 0 0 0 15.5 9.937l6.135 1.581a.5.5 0 0 1 0 .964L15.5 14.063a2 2 0 0 0-1.437 1.437l-1.582 6.135a.5.5 0 0 1-.963 0z"/><path d="M20 3v4M22 5h-4"/><circle cx="4" cy="20" r="2"/></svg>
<svg class="a ic" style="left:471px;top:333px;color:#c9ccd3" width="20" height="20" viewBox="0 0 24 24" stroke-width="1.9"><path d="M4.037 4.688a.495.495 0 0 1 .651-.651l16 6.5a.5.5 0 0 1-.063.947l-6.124 1.58a2 2 0 0 0-1.438 1.435l-1.579 6.126a.5.5 0 0 1-.947.063z"/></svg>
<svg class="a ic" style="left:471px;top:388px;color:#c9ccd3" width="20" height="20" viewBox="0 0 24 24" stroke-width="1.9"><path d="M14.5 4h-5L7 7H4a2 2 0 0 0-2 2v9a2 2 0 0 0 2 2h16a2 2 0 0 0 2-2V9a2 2 0 0 0-2-2h-3l-2.5-3z"/><circle cx="12" cy="13" r="3"/></svg>
<svg class="a ic" style="left:471px;top:443px;color:#c9ccd3" width="20" height="20" viewBox="0 0 24 24" stroke-width="1.9"><rect x="3" y="5" width="18" height="14" rx="2" ry="2"/><path d="M7 15h4M15 15h2M7 11h2M13 11h4"/></svg>
<div class="a" style="left:489px;top:635px;width:873px;height:45px;border-radius:23px;background:#040404"></div>
<div class="a" style="left:497px;top:637px;width:40px;height:40px;border-radius:20px;background:#fff"></div>
<svg class="a" style="left:507px;top:647px" width="20" height="20" viewBox="0 0 24 24"><path d="M7.5 5 19.5 12 7.5 19z" fill="#111" stroke="#111" stroke-width="3.2" stroke-linejoin="round"/></svg>
<div class="a" style="left:561px;top:650px;font-size:11px;font-weight:bold;color:#d6d8dc;line-height:14px">0:00</div>
<div class="a" style="left:604px;top:656px;width:556px;height:3px;border-radius:2px;background:#222224"></div>
<div class="a" style="left:589px;top:651px;width:12px;height:12px;border-radius:6px;background:#fff"></div>
<div class="a" style="left:1169px;top:650px;font-size:11px;color:#8b8f98;line-height:14px">0:03</div>
<svg class="a ic" style="left:1221px;top:649px;color:#c3c6cd" width="18" height="18" viewBox="0 0 24 24" stroke-width="1.9"><path d="M11 4.702a.705.705 0 0 0-1.203-.498L6.413 7.587A1.4 1.4 0 0 1 5.416 8H3a1 1 0 0 0-1 1v6a1 1 0 0 0 1 1h2.416a1.4 1.4 0 0 1 .997.413l3.383 3.384A.705.705 0 0 0 11 19.298z"/><path d="M16 9a5 5 0 0 1 0 6"/><path d="M19.364 18.364a9 9 0 0 0 0-12.728"/></svg>
<div class="a" style="left:1247px;top:656px;width:100px;height:3px;border-radius:2px;background:#cfcfd2"></div>
<div class="a" style="left:1341px;top:651px;width:12px;height:12px;border-radius:6px;background:#fff"></div>
<div class="a" style="left:905px;top:715px;width:40px;height:4px;border-radius:2px;background:#3a3a3e"></div>
<div class="a" style="left:451px;top:740px;width:948px;height:287px;border-radius:16px;background:#161617;border:1px solid #2a2a2c;overflow:hidden">
  <div class="a" style="left:0;top:124px;width:948px;height:163px;background:#1a1a1b"></div>
  <div class="a" style="left:0;top:83px;width:948px;height:1px;background:#2a2a2c"></div>
  <div class="a" style="left:0;top:123px;width:948px;height:1px;background:#2c2c2e"></div>
</div>
<svg class="a ic" style="left:480px;top:773px;color:#b4b7be" width="20" height="20" viewBox="0 0 24 24" stroke-width="1.9"><circle cx="11" cy="11" r="8"/><path d="m21 21-4.3-4.3M11 8v6M8 11h6"/></svg>
<svg class="a ic" style="left:520px;top:773px;color:#b4b7be" width="20" height="20" viewBox="0 0 24 24" stroke-width="1.9"><path d="m21.64 3.64-1.28-1.28a1.21 1.21 0 0 0-1.72 0L2.36 18.64a1.21 1.21 0 0 0 0 1.72l1.28 1.28a1.2 1.2 0 0 0 1.72 0L21.64 5.36a1.2 1.2 0 0 0 0-1.72"/><path d="m14 7 3 3M5 6v4M19 14v4M10 2v2M7 8H3M21 16h-4M11 3H9"/></svg>
<svg class="a ic" style="left:560px;top:773px;color:#b4b7be" width="20" height="20" viewBox="0 0 24 24" stroke-width="1.9"><circle cx="6" cy="6" r="3"/><path d="M8.12 8.12 12 12M20 4 8.12 15.88"/><circle cx="6" cy="18" r="3"/><path d="M14.8 14.8 20 20"/></svg>
<svg class="a ic" style="left:600px;top:773px;color:#b4b7be" width="20" height="20" viewBox="0 0 24 24" stroke-width="1.9"><path d="M21 15a2 2 0 0 1-2 2H7l-4 4V5a2 2 0 0 1 2-2h14a2 2 0 0 1 2 2z"/></svg>
<svg class="a ic" style="left:640px;top:773px;color:#b4b7be" width="20" height="20" viewBox="0 0 24 24" stroke-width="1.9"><path d="m12 14 4-4"/><path d="M3.34 19a10 10 0 1 1 17.32 0"/></svg>
<svg class="a ic" style="left:680px;top:773px;color:#b4b7be" width="20" height="20" viewBox="0 0 24 24" stroke-width="1.9"><path d="M9 18V5l12-2v13"/><circle cx="6" cy="18" r="3"/><circle cx="18" cy="16" r="3"/></svg>
<div class="a" style="left:727px;top:773px;font-size:15px;color:#b4b7be;line-height:18px">16:9</div>
<svg class="a ic" style="left:762px;top:774px;color:#b4b7be" width="18" height="18" viewBox="0 0 24 24" stroke-width="2"><path d="m6 9 6 6 6-6"/></svg>
<div class="a" style="left:802px;top:771px;width:1px;height:21px;background:#2c2c30"></div>
<svg class="a ic" style="left:822px;top:773px;color:#b4b7be" width="20" height="20" viewBox="0 0 24 24" stroke-width="1.9"><path d="M6 2v14a2 2 0 0 0 2 2h14"/><path d="M18 22V8a2 2 0 0 0-2-2H2"/></svg>
<div class="a" style="left:849px;top:773px;font-size:15px;color:#b4b7be;line-height:18px">裁剪</div>
<svg class="a ic" style="left:909px;top:772px;color:#b4b7be" width="21" height="21" viewBox="0 0 24 24" stroke-width="1.9"><circle cx="12" cy="12" r="10"/><path d="M9.09 9a3 3 0 0 1 5.83 1c0 2-3 3-3 3M12 17h.01"/></svg>
<div class="a" style="left:938px;top:773px;font-size:15px;color:#b4b7be;line-height:18px">修剪的工作方式</div>
<div class="a kbd" style="left:1072px;top:761px;width:50px;height:44px;padding:3px 0 0 8px">Side<br>Scroll</div>
<div class="a" style="left:1130px;top:773px;font-size:13.5px;color:#9a9da4;line-height:18px">Pan</div>
<div class="a kbd" style="left:1172px;top:750px;width:67px;height:64px;padding:4px 0 0 8px">Shift +<br>Ctrl +<br>Scroll</div>
<div class="a" style="left:1247px;top:773px;font-size:13.5px;color:#9a9da4;line-height:18px">Pan</div>
<div class="a kbd" style="left:1289px;top:750px;width:50px;height:64px;padding:4px 0 0 8px">Ctrl<br>+<br>Scroll</div>
<div class="a" style="left:1346px;top:773px;font-size:13.5px;color:#9a9da4;line-height:18px">Zoom</div>
<div class="a" style="left:468.0px;top:825px;width:1px;height:11px;background:#55565a"></div>
<div class="a tk" style="left:428.5px;top:842px;width:80px;text-align:center;line-height:14px">0:00.0</div>
<div class="a" style="left:604.3px;top:825px;width:1px;height:11px;background:#55565a"></div>
<div class="a tk" style="left:564.8px;top:842px;width:80px;text-align:center;line-height:14px">0:00.5</div>
<div class="a" style="left:740.6px;top:825px;width:1px;height:11px;background:#55565a"></div>
<div class="a tk" style="left:701.1px;top:842px;width:80px;text-align:center;line-height:14px">0:01.0</div>
<div class="a" style="left:876.9px;top:825px;width:1px;height:11px;background:#55565a"></div>
<div class="a tk" style="left:837.4px;top:842px;width:80px;text-align:center;line-height:14px">0:01.5</div>
<div class="a" style="left:1013.2px;top:825px;width:1px;height:11px;background:#55565a"></div>
<div class="a tk" style="left:973.7px;top:842px;width:80px;text-align:center;line-height:14px">0:02.0</div>
<div class="a" style="left:1149.5px;top:825px;width:1px;height:11px;background:#55565a"></div>
<div class="a tk" style="left:1110.0px;top:842px;width:80px;text-align:center;line-height:14px">0:02.5</div>
<div class="a" style="left:1285.8px;top:825px;width:1px;height:11px;background:#55565a"></div>
<div class="a tk" style="left:1246.3px;top:842px;width:80px;text-align:center;line-height:14px">0:03.0</div>
<div class="a" style="left:495.8px;top:857px;width:1px;height:7px;background:#1c1c1f"></div>
<div class="a" style="left:523.0px;top:857px;width:1px;height:7px;background:#1c1c1f"></div>
<div class="a" style="left:550.3px;top:857px;width:1px;height:7px;background:#1c1c1f"></div>
<div class="a" style="left:577.5px;top:857px;width:1px;height:7px;background:#1c1c1f"></div>
<div class="a" style="left:632.1px;top:857px;width:1px;height:7px;background:#1c1c1f"></div>
<div class="a" style="left:659.3px;top:857px;width:1px;height:7px;background:#1c1c1f"></div>
<div class="a" style="left:686.6px;top:857px;width:1px;height:7px;background:#1c1c1f"></div>
<div class="a" style="left:713.8px;top:857px;width:1px;height:7px;background:#1c1c1f"></div>
<div class="a" style="left:768.4px;top:857px;width:1px;height:7px;background:#1c1c1f"></div>
<div class="a" style="left:795.6px;top:857px;width:1px;height:7px;background:#1c1c1f"></div>
<div class="a" style="left:822.9px;top:857px;width:1px;height:7px;background:#1c1c1f"></div>
<div class="a" style="left:850.1px;top:857px;width:1px;height:7px;background:#1c1c1f"></div>
<div class="a" style="left:904.7px;top:857px;width:1px;height:7px;background:#1c1c1f"></div>
<div class="a" style="left:931.9px;top:857px;width:1px;height:7px;background:#1c1c1f"></div>
<div class="a" style="left:959.2px;top:857px;width:1px;height:7px;background:#1c1c1f"></div>
<div class="a" style="left:986.4px;top:857px;width:1px;height:7px;background:#1c1c1f"></div>
<div class="a" style="left:1041.0px;top:857px;width:1px;height:7px;background:#1c1c1f"></div>
<div class="a" style="left:1068.2px;top:857px;width:1px;height:7px;background:#1c1c1f"></div>
<div class="a" style="left:1095.5px;top:857px;width:1px;height:7px;background:#1c1c1f"></div>
<div class="a" style="left:1122.7px;top:857px;width:1px;height:7px;background:#1c1c1f"></div>
<div class="a" style="left:1177.3px;top:857px;width:1px;height:7px;background:#1c1c1f"></div>
<div class="a" style="left:1204.5px;top:857px;width:1px;height:7px;background:#1c1c1f"></div>
<div class="a" style="left:1231.8px;top:857px;width:1px;height:7px;background:#1c1c1f"></div>
<div class="a" style="left:1259.0px;top:857px;width:1px;height:7px;background:#1c1c1f"></div>
<div class="a" style="left:1313.6px;top:857px;width:1px;height:7px;background:#1c1c1f"></div>
<div class="a" style="left:1340.8px;top:857px;width:1px;height:7px;background:#1c1c1f"></div>
<div class="a" style="left:1368.1px;top:857px;width:1px;height:7px;background:#1c1c1f"></div>
<div class="a hint" style="left:725px;top:872px">Press Z to add zoom</div>
<div class="a hint" style="left:725px;top:907px">Press T to add trim</div>
<div class="a hint" style="left:725px;top:942px">Press A to add annotation</div>
<div class="a hint" style="left:725px;top:977px">Press S to add speed</div>
<div class="a hint" style="left:725px;top:1012px">Click music icon to add audio</div>
<div class="a" style="left:453px;top:832px;width:2px;height:195px;background:#3b6ff0"></div>
<svg class="a" style="left:450px;top:824px" width="13" height="16" viewBox="0 0 13 16"><path d="M1 1h6a5 5 0 0 1 5 5v1a5 5 0 0 1-2 4L4 16H3V1z" fill="#3b6ff0"/></svg>
<div id="wb"></div>
</div>
</body></html>
